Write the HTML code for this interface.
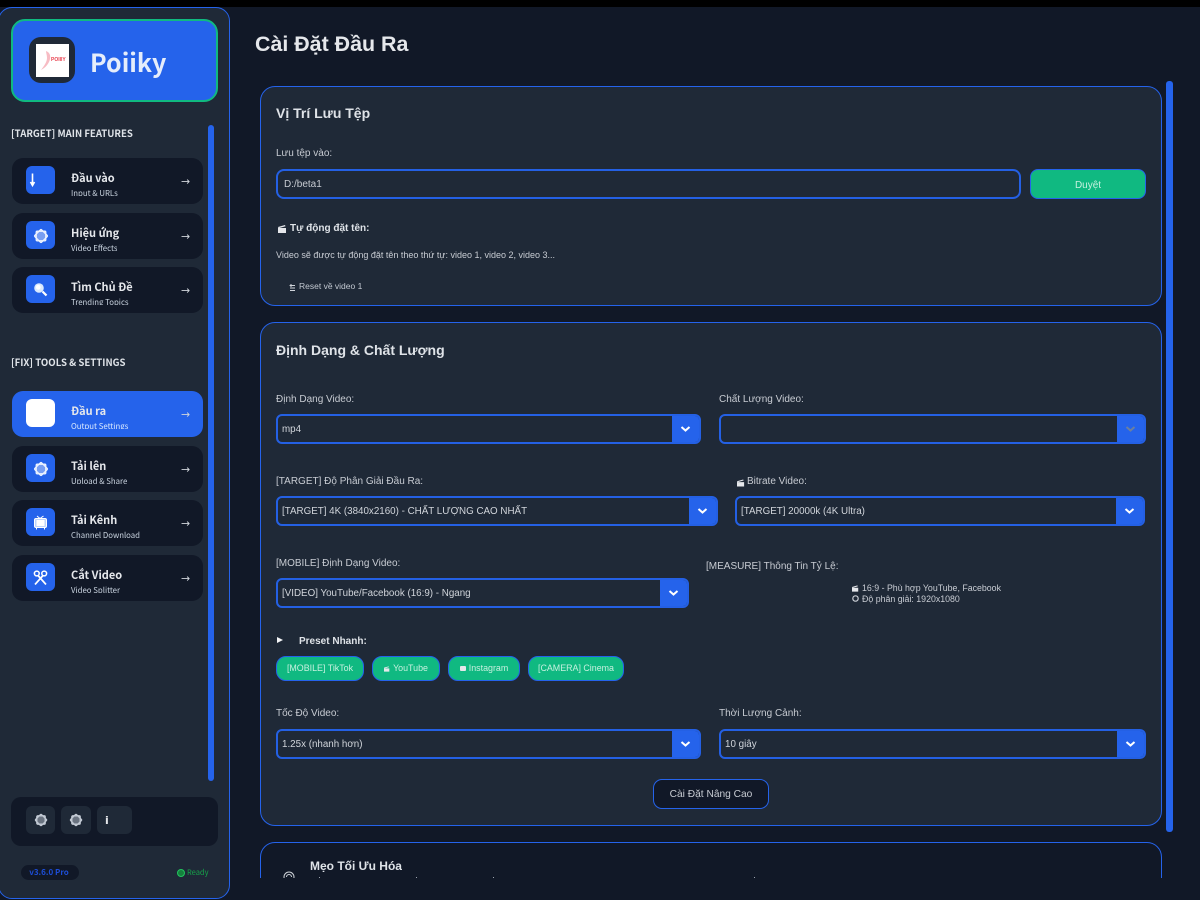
<!DOCTYPE html>
<html lang="vi"><head><meta charset="utf-8"><title>Poiiky</title>
<style>
*{box-sizing:border-box;margin:0;padding:0}
html,body{width:1200px;height:900px;overflow:hidden;background:#111827}
body{position:relative;font-family:"Liberation Sans",Arial,sans-serif;color:#d1d5db}
.a{position:absolute;white-space:nowrap}
.s{font-family:"Noto Sans CJK JP","Liberation Sans",sans-serif}
.nav{position:absolute;left:12px;width:191px;height:46px;background:#111827;border-radius:11px}
.nav.on{background:#2563eb}
.ic{position:absolute;left:14px;top:8px;width:29px;height:28px;background:#2563eb;border-radius:6px}
.nav.on .ic{background:#fff}
.ic svg{position:absolute;left:7px;top:7px;width:15px;height:15px}
.t{position:absolute;left:59px;top:12px;font:700 11px/16px "Noto Sans CJK JP","Liberation Sans",sans-serif;color:#e5e7eb;white-space:nowrap}
.d{position:absolute;left:59px;top:30px;height:8px;overflow:hidden;font:400 7.800px/11px "Noto Sans CJK JP","Liberation Sans",sans-serif;color:#cbd5e1;white-space:nowrap}
.nav.on .d{color:#dbeafe}
.ar{position:absolute;left:169px;top:15px;font:11px/18px "DejaVu Sans",sans-serif;color:#d1d5db}
.hd{font:700 9.600px/14px "Noto Sans CJK JP","Liberation Sans",sans-serif;color:#dfe3e8}
.card{position:absolute;left:260px;width:902px;background:#1f2937;border:1px solid #2563eb;border-radius:15px}
.ct{font:700 14px/18px "Liberation Sans",sans-serif;color:#dfe3e8}
.l{font-size:10px;line-height:12px;color:#c8ccd3}
.sel{position:absolute;height:30px;border:2px solid #2460e4;border-radius:6px;background:#1f2937;font-size:9.800px;line-height:26px;padding:1px 0 0 4px;color:#d1d5db;white-space:nowrap;overflow:hidden}
.sel i{position:absolute;right:0;top:0;width:27px;height:26px;background:#2563eb}
.sel svg{position:absolute;left:8px;top:9px;width:11px;height:8px}
.chip{position:absolute;top:656px;height:25px;background:#10b981;border:1px solid #2563eb;border-radius:10px;font-size:8.900px;line-height:23px;text-align:center;color:#c6f0df;white-space:nowrap}
.gb{position:absolute;top:806px;height:28px;background:#1f2937;border-radius:6px}
</style></head><body>
<div class="a" style="left:0;top:0;width:1200px;height:7px;background:#000"></div>

<!-- sidebar -->
<div class="a" style="left:-2px;top:7px;width:232px;height:892px;background:#1f2937;border:1px solid #2563eb;border-radius:14px"></div>
<div class="a" style="left:11px;top:19px;width:207px;height:83px;background:#2563eb;border:2px solid #10b981;border-radius:14px"></div>
<div class="a" style="left:29px;top:37px;width:46px;height:46px;background:#1f2937;border-radius:12px"></div>
<div class="a" style="left:36px;top:44px;width:33px;height:33px;background:#fff">
<svg width="33" height="33" viewBox="0 0 33 33" style="position:absolute;left:0;top:0"><path d="M10 7c3 1 5 4 4 8-1 5-5 9-9 11 3-4 6-8 6-12 0-3-1-5-1-7z" fill="#f7bcc4"/></svg>
<span style="position:absolute;left:15px;top:13px;font:700 5px/7px 'Liberation Sans',sans-serif;color:#e8414f">POIIIY</span></div>
<div class="a s" style="left:90px;top:42px;font-size:25px;line-height:40px;font-weight:700;color:#e5edfb">Poiiky</div>

<div class="a hd" style="left:11px;top:126px">[TARGET] MAIN FEATURES</div>
<div class="a" style="left:208px;top:125px;width:6px;height:656px;background:#2563eb;border-radius:3px"></div>

<div class="nav" style="top:158px"><div class="ic"><svg viewBox="0 0 15 15" style="left:1px"><path d="M5.500 .5v10.500M3.500 9l2 3.500 2-3.500" fill="none" stroke="#fff" stroke-width="1.600"/></svg></div><div class="t">Đầu vào</div><div class="d">Input &amp; URLs</div><div class="ar">→</div></div>
<div class="nav" style="top:213px"><div class="ic"><svg viewBox="0 0 15 15" style="left:6.500px;top:6.500px;width:16px;height:16px"><g fill="rgba(255,255,255,.22)" stroke="#eef4ff" stroke-width="1.200"><rect x="3" y="3" width="9" height="9" rx="1"/><rect x="3" y="3" width="9" height="9" rx="1" transform="rotate(45 7.500 7.500)"/></g></svg></div><div class="t">Hiệu ứng</div><div class="d">Video Effects</div><div class="ar">→</div></div>
<div class="nav" style="top:267px"><div class="ic"><svg viewBox="0 0 15 15"><circle cx="6" cy="6" r="4.800" fill="#dbeafe"/><circle cx="5.300" cy="5.300" r="2.400" fill="#fff"/><path d="M9.500 9.500l4 4" stroke="#fff" stroke-width="2.200"/></svg></div><div class="t">Tìm Chủ Đề</div><div class="d">Trending Topics</div><div class="ar">→</div></div>

<div class="a hd" style="left:11px;top:355px">[FIX] TOOLS &amp; SETTINGS</div>

<div class="nav on" style="top:391px"><div class="ic"></div><div class="t">Đầu ra</div><div class="d">Output Settings</div><div class="ar">→</div></div>
<div class="nav" style="top:446px"><div class="ic"><svg viewBox="0 0 15 15" style="left:6.500px;top:6.500px;width:16px;height:16px"><g fill="rgba(255,255,255,.22)" stroke="#eef4ff" stroke-width="1.200"><rect x="3" y="3" width="9" height="9" rx="1"/><rect x="3" y="3" width="9" height="9" rx="1" transform="rotate(45 7.500 7.500)"/></g></svg></div><div class="t">Tải lên</div><div class="d">Upload &amp; Share</div><div class="ar">→</div></div>
<div class="nav" style="top:500px"><div class="ic"><svg viewBox="0 0 15 15"><path d="M4 1l3 2.500L10.500 1" fill="none" stroke="#fff"/><rect x="1.500" y="3.500" width="12" height="9" rx="1.500" fill="#bfd4fa" stroke="#fff"/><rect x="3.500" y="5" width="8" height="6" fill="#fff"/><path d="M3.500 12.500v2M11.500 12.500v2" stroke="#fff"/></svg></div><div class="t">Tải Kênh</div><div class="d">Channel Download</div><div class="ar">→</div></div>
<div class="nav" style="top:555px"><div class="ic"><svg viewBox="0 0 15 15"><circle cx="3.800" cy="3.500" r="2.400" fill="none" stroke="#fff" stroke-width="1.500"/><circle cx="11.200" cy="3.500" r="2.400" fill="none" stroke="#fff" stroke-width="1.500"/><path d="M5 5.500l8 9M10 5.500l-8 9" stroke="#fff" stroke-width="1.700"/></svg></div><div class="t">Cắt Video</div><div class="d">Video Splitter</div><div class="ar">→</div></div>

<div class="a" style="left:11px;top:797px;width:207px;height:49px;background:#111827;border-radius:10px"></div>
<div class="gb" style="left:26px;width:29px"><svg width="14" height="14" viewBox="0 0 15 15" style="position:absolute;left:8px;top:7px"><g fill="rgba(203,213,225,.25)" stroke="#c3cad4" stroke-width="1.400"><rect x="3" y="3" width="9" height="9" rx="1"/><rect x="3" y="3" width="9" height="9" rx="1" transform="rotate(45 7.500 7.500)"/></g></svg></div>
<div class="gb" style="left:61px;width:30px"><svg width="14" height="14" viewBox="0 0 15 15" style="position:absolute;left:8px;top:7px"><g fill="rgba(203,213,225,.25)" stroke="#c3cad4" stroke-width="1.400"><rect x="3" y="3" width="9" height="9" rx="1"/><rect x="3" y="3" width="9" height="9" rx="1" transform="rotate(45 7.500 7.500)"/></g></svg></div>
<div class="gb" style="left:97px;width:35px"><span style="position:absolute;left:8px;top:7px;font:700 11px/15px 'DejaVu Sans',sans-serif;color:#e5e7eb">i</span></div>
<div class="a" style="left:21px;top:865px;width:58px;height:15px;background:#111827;border-radius:8px;text-align:center;font:700 8px/15px 'Noto Sans CJK JP',sans-serif;color:#1d4ed8;padding-right:2px">v3.6.0 Pro</div>
<div class="a" style="left:177px;top:869px;width:8px;height:8px;border-radius:50%;background:#15803d;border:1px solid #22c55e"></div>
<div class="a s" style="left:187px;top:867px;font-size:7.500px;line-height:12px;color:#16a34a">Ready</div>

<!-- main -->
<div class="a" style="left:255px;top:31px;font-size:21.400px;line-height:26px;font-weight:700;color:#e5e7eb">Cài Đặt Đầu Ra</div>
<div class="a" style="left:1166px;top:81px;width:7px;height:751px;background:#2563eb;border-radius:3px"></div>

<!-- card 1 -->
<div class="card" style="top:86px;height:220px"></div>
<div class="a ct" style="left:276px;top:104px">Vị Trí Lưu Tệp</div>
<div class="a l" style="left:276px;top:147.500px">Lưu tệp vào:</div>
<div class="a" style="left:276px;top:169px;width:745px;height:30px;border:2px solid #2460e4;border-radius:8px;font-size:10px;line-height:26px;padding:1px 0 0 6px;color:#c8ccd3">D:/beta1</div>
<div class="a" style="left:1030px;top:169px;width:116px;height:30px;background:#10b981;border:1px solid #2563eb;border-radius:8px;font-size:10px;line-height:28px;padding-top:2px;text-align:center;color:#c6f0df">Duyệt</div>
<svg class="a" style="left:278px;top:225px" width="9" height="8" viewBox="0 0 9 8"><path d="M0 3h8v5H0zM0 2l7-2 .5 1.200-7 2z" fill="#e5e7eb"/></svg>
<div class="a" style="left:290px;top:223px;font-size:10px;line-height:12px;font-weight:700;color:#dfe3e8">Tự động đặt tên:</div>
<div class="a" style="left:276px;top:249px;font-size:9px;line-height:12px;color:#c8ccd3">Video sẽ được tự động đặt tên theo thứ tự: video 1, video 2, video 3...</div>
<svg class="a" style="left:289px;top:284px" width="7" height="8" viewBox="0 0 7 8"><path d="M1 1.500h5M2.500.2L1 1.500l1.500 1.300M1 4h5M1 6.500h5" fill="none" stroke="#d1d5db" stroke-width=".9"/></svg>
<div class="a" style="left:299px;top:280px;font-size:8.500px;line-height:12px;color:#c3c9d2">Reset về video 1</div>

<!-- card 2 -->
<div class="card" style="top:322px;height:504px"></div>
<div class="a ct" style="left:276px;top:341px">Định Dạng &amp; Chất Lượng</div>

<div class="a l" style="left:276px;top:392px;margin-top:1.500px">Định Dạng Video:</div>
<div class="sel" style="left:276px;top:414px;width:425px">mp4<i><svg viewBox="0 0 11 8"><path d="M1.500 2l4 3.500 4-3.500" fill="none" stroke="#fff" stroke-width="2"/></svg></i></div>
<div class="a l" style="left:719px;top:392px;margin-top:1.500px">Chất Lượng Video:</div>
<div class="sel" style="left:719px;top:414px;width:427px"><i><svg viewBox="0 0 11 8"><path d="M1.500 2l4 3.500 4-3.500" fill="none" stroke="#6b7f9f" stroke-width="2"/></svg></i></div>

<div class="a l" style="left:276px;top:474px;margin-top:1.500px">[TARGET] Độ Phân Giải Đầu Ra:</div>
<div class="sel" style="left:276px;top:496px;width:442px">[TARGET] 4K (3840x2160) - CHẤT LƯỢNG CAO NHẤT<i><svg viewBox="0 0 11 8"><path d="M1.500 2l4 3.500 4-3.500" fill="none" stroke="#fff" stroke-width="2"/></svg></i></div>
<svg class="a" style="left:737px;top:479px" width="8" height="8" viewBox="0 0 9 8"><path d="M0 3h8v5H0zM0 2l7-2 .5 1.200-7 2z" fill="#e5e7eb"/></svg>
<div class="a l" style="left:747px;top:474px;margin-top:1.500px">Bitrate Video:</div>
<div class="sel" style="left:735px;top:496px;width:410px">[TARGET] 20000k (4K Ultra)<i><svg viewBox="0 0 11 8"><path d="M1.500 2l4 3.500 4-3.500" fill="none" stroke="#fff" stroke-width="2"/></svg></i></div>

<div class="a l" style="left:276px;top:556px;margin-top:1.500px">[MOBILE] Định Dạng Video:</div>
<div class="sel" style="left:276px;top:578px;width:413px">[VIDEO] YouTube/Facebook (16:9) - Ngang<i><svg viewBox="0 0 11 8"><path d="M1.500 2l4 3.500 4-3.500" fill="none" stroke="#fff" stroke-width="2"/></svg></i></div>
<div class="a l" style="left:706px;top:559px;margin-top:1.500px">[MEASURE] Thông Tin Tỷ Lệ:</div>
<svg class="a" style="left:852px;top:585px" width="7" height="7" viewBox="0 0 9 8"><path d="M0 3h8v5H0zM0 2l7-2 .5 1.200-7 2z" fill="#e5e7eb"/></svg>
<div class="a" style="left:862px;top:582px;font-size:8.800px;line-height:12px;color:#c8ccd3">16:9 - Phù hợp YouTube, Facebook</div>
<svg class="a" style="left:852px;top:595px" width="7" height="7" viewBox="0 0 7 7"><circle cx="3.500" cy="3.500" r="2.700" fill="none" stroke="#c8ccd3" stroke-width="1.200"/></svg>
<div class="a" style="left:862px;top:593px;font-size:8.800px;line-height:12px;color:#c8ccd3">Độ phân giải: 1920x1080</div>

<svg class="a" style="left:277px;top:637px" width="6" height="6" viewBox="0 0 6 6"><path d="M0 0l6 3-6 3z" fill="#f3f4f6"/></svg>
<div class="a" style="left:299px;top:634px;margin-top:1.500px;font-size:10px;line-height:12px;font-weight:700;color:#dfe3e8">Preset Nhanh:</div>
<div class="chip" style="left:276px;width:88px">[MOBILE] TikTok</div>
<div class="chip" style="left:372px;width:68px"><svg width="6" height="6" viewBox="0 0 9 8" style="vertical-align:-1px;margin-right:3px"><path d="M0 3h8v5H0zM0 2l7-2 .5 1.200-7 2z" fill="#e5e7eb"/></svg>YouTube</div>
<div class="chip" style="left:448px;width:72px"><svg width="6" height="6" viewBox="0 0 6 6" style="vertical-align:-1px;margin-right:3px"><rect width="6" height="5" rx="1" fill="#e5e7eb"/></svg>Instagram</div>
<div class="chip" style="left:528px;width:96px">[CAMERA] Cinema</div>

<div class="a l" style="left:276px;top:706px;margin-top:1.500px">Tốc Độ Video:</div>
<div class="sel" style="left:276px;top:729px;width:425px">1.25x (nhanh hơn)<i><svg viewBox="0 0 11 8"><path d="M1.500 2l4 3.500 4-3.500" fill="none" stroke="#fff" stroke-width="2"/></svg></i></div>
<div class="a l" style="left:719px;top:706px;margin-top:1.500px">Thời Lượng Cảnh:</div>
<div class="sel" style="left:719px;top:729px;width:427px">10 giây<i><svg viewBox="0 0 11 8"><path d="M1.500 2l4 3.500 4-3.500" fill="none" stroke="#fff" stroke-width="2"/></svg></i></div>
<div class="a" style="left:653px;top:779px;width:116px;height:30px;background:#111827;border:1px solid #2563eb;border-radius:9px;text-align:center;font-size:10.200px;line-height:28px;padding-top:1px;color:#c8ccd3">Cài Đặt Nâng Cao</div>

<!-- card 3, clipped -->
<div class="a" style="left:250px;top:800px;width:925px;height:78px;overflow:hidden">
<div style="position:absolute;left:10px;top:42px;width:902px;height:80px;border:1px solid #2563eb;border-radius:15px;background:#111827"></div>
<div class="a" style="left:60px;top:58px;font-size:12px;line-height:16px;font-weight:700;color:#dfe3e8">Mẹo Tối Ưu Hóa</div>
<svg class="a" style="left:33px;top:71px" width="12" height="12" viewBox="0 0 12 12"><circle cx="6" cy="6" r="5" fill="none" stroke="#d1d5db"/><path d="M3.500 6a2.500 2.500 0 015 0" fill="none" stroke="#d1d5db"/></svg>
<i style="position:absolute;left:69px;top:77px;width:1px;height:1px;background:#9ca3af"></i>
<i style="position:absolute;left:166px;top:77px;width:1px;height:1px;background:#9ca3af"></i>
<i style="position:absolute;left:243px;top:77px;width:1px;height:1px;background:#9ca3af"></i>
<i style="position:absolute;left:504px;top:77px;width:1px;height:1px;background:#9ca3af"></i>
</div>
</body></html>
